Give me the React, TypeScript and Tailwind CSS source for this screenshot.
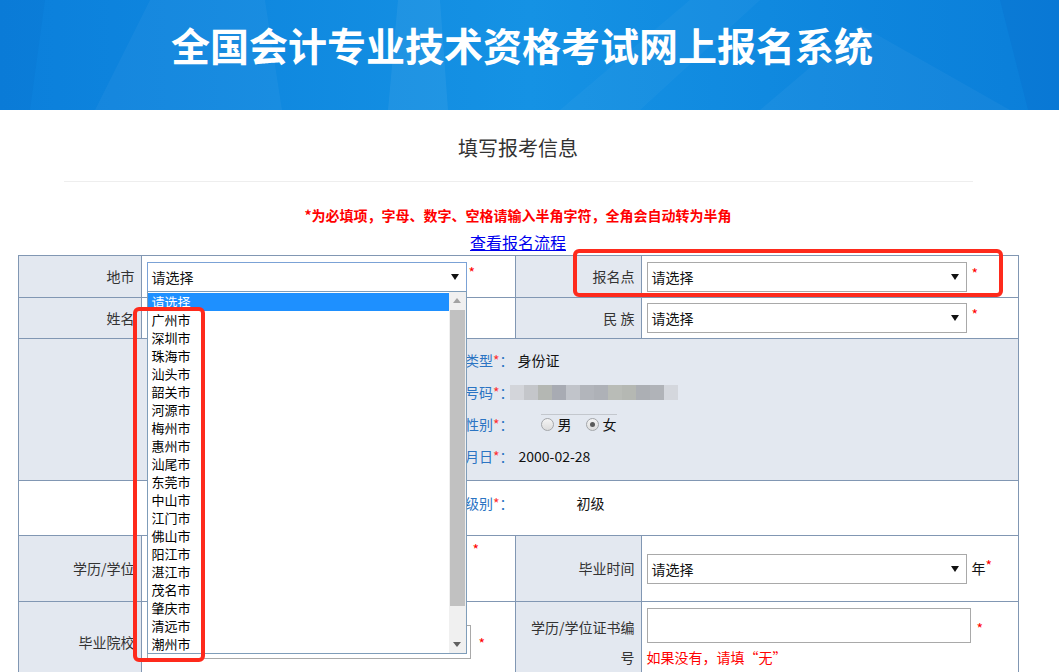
import React from "react";

const cities = [
  "请选择", "广州市", "深圳市", "珠海市", "汕头市", "韶关市", "河源市", "梅州市", "惠州市", "汕尾市",
  "东莞市", "中山市", "江门市", "佛山市", "阳江市", "湛江市", "茂名市", "肇庆市", "清远市", "潮州市",
];

// blurred id number blocks
const mosaic = [
  "bg-[#d3d5da]", "bg-[#c4c6ca]", "bg-[#b4b7b3]", "bg-[#a8abb3]", "bg-[#c1c4ca]", "bg-[#b2b5bb]",
  "bg-[#aeb1b7]", "bg-[#b9bcb7]", "bg-[#b5b8b3]", "bg-[#acafb4]", "bg-[#b0b3b8]", "bg-[#d4d7dd]",
];

const labelCell = "border border-[#8197b3] bg-[#e3e8f0] pl-[10px] pr-[6px] text-right align-middle";
const valueCell = "border border-[#8197b3] pl-[5px] align-middle";

function Star({ className = "" }: { className?: string }) {
  return <span className={"text-[14px] leading-[14px] text-[#ff0000] " + className}>*</span>;
}

function Select({ focused = false }: { focused?: boolean }) {
  return (
    <div
      className={
        focused
          ? "flex h-[30px] w-[320px] shrink-0 items-center justify-between border border-[#7ba2d6] bg-white pl-[4px] pr-[7px]"
          : "flex h-[30px] w-[320px] shrink-0 items-center justify-between border border-[#a9a9a9] bg-white pl-[4px] pr-[7px]"
      }
    >
      <span className="leading-[20px] text-[#111]">请选择</span>
      <svg width="8" height="6" viewBox="0 0 8 6">
        <path d="M0 0h8L4 6z" fill="#111" />
      </svg>
    </div>
  );
}

function Radio({ checked = false }: { checked?: boolean }) {
  return (
    <span className="flex h-[13px] w-[13px] items-center justify-center rounded-full border border-[#a3a6aa] bg-linear-to-b from-[#f4f4f4] to-[#dcdcdc]">
      {checked && <span className="h-[5px] w-[5px] rounded-full bg-[#5a5a5a]" />}
    </span>
  );
}

function CityList() {
  return (
    <div className="absolute left-0 top-[29px] z-10 flex h-[363px] w-[320px] border border-[#7f9db9] bg-white">
      <div className="flex-1 pt-[1px]">
        {cities.map((city, i) => (
          <div
            key={city}
            className={
              i === 0
                ? "h-[18px] bg-[#1e90ff] pl-[4px] text-[13px] leading-[18px] text-white"
                : "h-[18px] pl-[4px] text-[13px] leading-[18px] text-black"
            }
          >
            {city}
          </div>
        ))}
      </div>
      <div className="flex w-[17px] flex-col bg-[#f0f0f0]">
        <div className="flex h-[18px] items-center justify-center">
          <svg width="8" height="5" viewBox="0 0 8 5">
            <path d="M0 5h8L4 0z" fill="#a3a3a3" />
          </svg>
        </div>
        <div className="mx-[1px] h-[296px] bg-[#c1c1c1]" />
        <div className="flex-1" />
        <div className="flex h-[17px] items-center justify-center">
          <svg width="8" height="5" viewBox="0 0 8 5">
            <path d="M0 0h8L4 5z" fill="#606060" />
          </svg>
        </div>
      </div>
    </div>
  );
}

function InfoLine({ label, children }: { label: string; children: React.ReactNode }) {
  return (
    <div className="flex h-[32px] items-center">
      <div className="w-[495px] text-right text-[#2b74c3]">
        {label}
        <span className="text-[#ff3030]">*</span>：
      </div>
      {children}
    </div>
  );
}

export default function App() {
  return (
    <div className="relative min-h-[672px] w-full bg-white font-['Noto_Sans_CJK_SC','Noto_Sans',sans-serif] text-[14px] text-[#333]">
      <header className="relative h-[110px] overflow-hidden bg-linear-to-r from-[#0b7fdb] via-[#1592e4] to-[#0a7ed9]">
        <svg className="absolute inset-0 h-full w-full" viewBox="0 0 1059 110" preserveAspectRatio="none">
          <polygon points="0,0 45,0 30,110 0,110" fill="#0560c0" opacity="0.12" />
          <polygon points="95,110 150,0 265,0 282,110" fill="#ffffff" opacity="0.04" />
          <polygon points="388,110 398,0 440,0 448,110" fill="#ffffff" opacity="0.06" />
          <polygon points="560,110 690,0 760,0 640,110" fill="#ffffff" opacity="0.03" />
          <polygon points="760,110 860,25 1010,110" fill="#ffffff" opacity="0.04" />
          <polygon points="1000,0 1059,0 1059,110 1028,110" fill="#0560c0" opacity="0.18" />
        </svg>
        <h1 className="relative w-[1044px] pt-[20px] text-center text-[39px] font-bold leading-[48px] text-white">
          全国会计专业技术资格考试网上报名系统
        </h1>
      </header>

      <div className="w-[1036px]">
        <div className="pt-[26px] text-center text-[20px] leading-[24px] text-[#333]">填写报考信息</div>
        <div className="mx-auto mt-[21px] w-[909px] border-t border-[#eeeeee]" />
        <div className="mt-[23px] text-center text-[14px] font-bold leading-[20px] text-[#ff0000]">
          *为必填项，字母、数字、空格请输入半角字符，全角会自动转为半角
        </div>
        <div className="mt-[6px] text-center leading-[22px]">
          <a href="#" className="text-[16px] text-[#0000ee] underline">
            查看报名流程
          </a>
        </div>

        <table className="mx-auto mt-[1px] w-[1000px] table-fixed border-collapse">
          <colgroup>
            <col className="w-[123px]" />
            <col className="w-[374px]" />
            <col className="w-[126px]" />
            <col className="w-[377px]" />
          </colgroup>
          <tbody>
            <tr className="h-[42px]">
              <td className={labelCell}>地市</td>
              <td className={valueCell}>
                <div className="relative flex items-start">
                  <Select focused />
                  <Star className="ml-[2px] mt-[3px]" />
                  <CityList />
                </div>
              </td>
              <td className={labelCell}>报名点</td>
              <td className={valueCell}>
                <div className="flex items-start">
                  <Select />
                  <Star className="ml-[5px] mt-[4px]" />
                </div>
              </td>
            </tr>
            <tr className="h-[41px]">
              <td className={labelCell}>姓名</td>
              <td className={valueCell}>
                <div className="h-[28px] w-[300px] border border-[#a9a9a9]" />
              </td>
              <td className={labelCell}>民 族</td>
              <td className={valueCell}>
                <div className="flex items-start">
                  <Select />
                  <Star className="ml-[5px] mt-[4px]" />
                </div>
              </td>
            </tr>
            <tr className="h-[142px]">
              <td colSpan={4} className="border border-[#8197b3] bg-[#e3e8f0] pb-[8px] pt-[5px] align-top">
                <InfoLine label="证件类型">
                  <span className="ml-[4px] text-[#111]">身份证</span>
                </InfoLine>
                <InfoLine label="证件号码">
                  <div className="-ml-[4px] flex h-[15px]">
                    {mosaic.map((c, i) => (
                      <span key={i} className={"h-[15px] w-[14px] " + c} />
                    ))}
                  </div>
                </InfoLine>
                <InfoLine label="性别">
                  <div className="ml-[27px] flex h-[20px] items-center gap-[4px] border-t border-[#c3c7cd] text-[#111]">
                    <Radio />
                    <span>男</span>
                    <span className="w-[6px]" />
                    <Radio checked />
                    <span>女</span>
                  </div>
                </InfoLine>
                <InfoLine label="出生年月日">
                  <span className="ml-[5px] text-[#111]">2000-02-28</span>
                </InfoLine>
              </td>
            </tr>
            <tr className="h-[55px]">
              <td colSpan={4} className="border border-[#8197b3] bg-white pt-[6px] align-top">
                <InfoLine label="报考级别">
                  <span className="ml-[63px] text-[#111]">初级</span>
                </InfoLine>
              </td>
            </tr>
            <tr className="h-[66px]">
              <td className={labelCell}>学历/学位</td>
              <td className={valueCell}>
                <div className="flex items-start">
                  <div className="h-[30px] w-[320px] border border-[#a9a9a9] bg-white" />
                  <Star className="ml-[6px] -mt-[12px]" />
                </div>
              </td>
              <td className={labelCell}>毕业时间</td>
              <td className={valueCell}>
                <div className="flex items-center">
                  <Select />
                  <span className="ml-[5px] text-[#111]">年</span>
                  <Star className="-mt-[8px]" />
                </div>
              </td>
            </tr>
            <tr className="h-[74px]">
              <td className={labelCell}>毕业院校</td>
              <td className={valueCell}>
                <div className="flex items-start">
                  <div className="h-[34px] w-[324px] border border-[#a9a9a9] bg-white" />
                  <Star className="ml-[8px] mt-[11px]" />
                </div>
              </td>
              <td className={labelCell + " py-[10px] leading-[30px]"}>学历/学位证书编号</td>
              <td className={valueCell + " pb-[6px] pt-[6px] align-top"}>
                <div className="flex items-start">
                  <div className="h-[35px] w-[324px] border border-[#a9a9a9] bg-white" />
                  <Star className="ml-[6px] mt-[13px]" />
                </div>
                <div className="mt-[4px] leading-[20px] text-[#ff0000]">如果没有，请填“无”</div>
              </td>
            </tr>
          </tbody>
        </table>
      </div>

      {/* red annotation boxes */}
      <div className="absolute left-[133px] top-[307px] z-20 h-[355px] w-[72px] rounded-[6px] border-[4px] border-[#fe2a1c]" />
      <div className="absolute left-[573px] top-[249px] z-20 h-[48px] w-[430px] rounded-[6px] border-[4px] border-[#fe2a1c]" />
    </div>
  );
}
